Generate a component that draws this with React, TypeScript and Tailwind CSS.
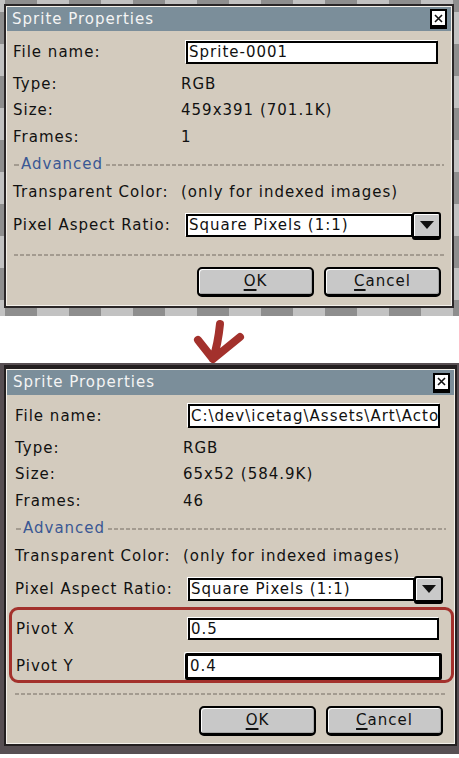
import type { ReactNode } from 'react'

const DASHES = 'h-[2px] bg-[repeating-linear-gradient(90deg,#a39b90_0_4px,transparent_4px_6px)]'

function CloseBox() {
  return (
    <div className="flex h-[20px] w-[17px] items-center justify-center border-2 border-b-[4px] border-black bg-white">
      <svg width="9" height="9" viewBox="0 0 9 9">
        <path d="M1 1L8 8M8 1L1 8" stroke="#111" strokeWidth="1.6" />
      </svg>
    </div>
  )
}

function TitleBar({ className }: { className: string }) {
  return (
    <div className={`flex shrink-0 items-center justify-between bg-[#7b8e9a] pr-[4px] ${className}`}>
      <span className="text-[#f4f4f4]">Sprite Properties</span>
      <CloseBox />
    </div>
  )
}

function InfoRow({ label, value, className }: { label: string; value: string; className: string }) {
  return (
    <div className={`flex items-center ${className}`}>
      <span className="w-[168px] shrink-0">{label}</span>
      <span className="whitespace-nowrap">{value}</span>
    </div>
  )
}

function TextField({ text, className }: { text: string; className: string }) {
  return (
    <div
      className={`flex shrink-0 items-center overflow-hidden whitespace-nowrap bg-white pl-[1px] shadow-[-1px_-1px_0_#fff] ${className}`}
    >
      {text}
    </div>
  )
}

function Dropdown() {
  return (
    <div className="ml-[5px] flex items-center">
      <div className="flex h-[23px] w-[227px] items-center border-2 border-black bg-white pl-[1px] shadow-[-1px_-1px_0_#fff]">
        Square Pixels (1:1)
      </div>
      <div className="-ml-[1px] flex h-[28px] w-[29px] items-center justify-center rounded-[3px] border-2 border-b-[4px] border-black bg-[#c9c9c9] shadow-[inset_1px_1px_0_#fff]">
        <svg width="14" height="8" viewBox="0 0 14 8">
          <path d="M0 0H14L7 8Z" fill="#111" />
        </svg>
      </div>
    </div>
  )
}

function AdvancedRow() {
  return (
    <div className="flex h-[27px] items-center pl-[1px]">
      <span className="h-[2px] w-[5px] bg-[#a39b90]" />
      <span className="ml-[2px] text-[#3a5894]">Advanced</span>
      <span className={`ml-[3px] flex-1 ${DASHES}`} />
    </div>
  )
}

function Btn({ first, rest }: { first: string; rest: string }) {
  return (
    <div className="flex h-[30px] w-[117px] items-center justify-center rounded-[5px] border-2 border-b-[3px] border-black bg-[#c8c8c8] shadow-[inset_1px_1px_0_#fff,inset_-1px_-1px_0_#a8a8a8]">
      <span className="underline decoration-[2px] underline-offset-[3px]">{first}</span>
      <span>{rest}</span>
    </div>
  )
}

function Buttons() {
  return (
    <div className="mt-[11px] flex h-[30px] justify-end gap-[10px] pr-[3px]">
      <Btn first="O" rest="K" />
      <Btn first="C" rest="ancel" />
    </div>
  )
}

function CommonRows({ size, frames, children }: { size: string; frames: string; children?: ReactNode }) {
  return (
    <>
      <InfoRow label="Type:" value="RGB" className="mt-[7px] h-[26px]" />
      <InfoRow label="Size:" value={size} className="h-[27px]" />
      <InfoRow label="Frames:" value={frames} className="h-[27px]" />
      <AdvancedRow />
      <InfoRow label="Transparent Color:" value="(only for indexed images)" className="h-[28px]" />
      <div className="mt-[5px] flex h-[29px] items-center">
        <span className="w-[168px] shrink-0">Pixel Aspect Ratio:</span>
        <Dropdown />
      </div>
      {children}
    </>
  )
}

export default function App() {
  return (
    <div className="flex h-[758px] w-[459px] flex-col overflow-hidden bg-white font-['DejaVu_Sans',sans-serif] text-[15px] tracking-[1px] text-[#111]">
      {/* before */}
      <div className="h-[316px] shrink-0 bg-[conic-gradient(#c2c2c2_25%,#8e8e8e_0_50%,#c2c2c2_0_75%,#8e8e8e_0)] bg-[length:64px_64px] bg-[position:5px_44px] pl-[4px] pt-[4px]">
        <div className="flex h-[304px] w-[450px] flex-col border-2 border-[#2a2627]">
          <div className="flex flex-1 flex-col border border-[#f3f0ea] bg-[#d3cbbe]">
            <TitleBar className="h-[24px] pl-[5px]" />
            <div className="flex flex-col pl-[6px] pr-[7px] pt-[10px]">
              <div className="flex h-[23px] items-center">
                <span className="w-[168px] shrink-0">File name:</span>
                <TextField text="Sprite-0001" className="ml-[5px] h-[23px] w-[252px] border-2 border-black" />
              </div>
              <CommonRows size="459x391 (701.1K)" frames="1" />
              <div className={`mt-[14px] ml-[1px] ${DASHES}`} />
              <Buttons />
            </div>
          </div>
        </div>
      </div>

      {/* arrow */}
      <div className="h-[47px] shrink-0">
        <svg width="459" height="47" viewBox="0 0 459 47" className="overflow-visible">
          <path
            d="M220 8Q218 28 213 43M198 24L213 43L240 21"
            fill="none"
            stroke="#a3312c"
            strokeWidth="8"
            strokeLinecap="round"
            strokeLinejoin="round"
          />
        </svg>
      </div>

      {/* after */}
      <div className="h-[391px] shrink-0 bg-[#574f53] pl-[4px] pt-[2px]">
        <div className="flex h-[381px] w-[453px] flex-col border-2 border-t-4 border-[#231f20]">
          <div className="flex flex-1 flex-col border border-[#f3f0ea] bg-[#d3cbbe]">
            <TitleBar className="h-[25px] pl-[6px]" />
            <div className="flex flex-col pl-[8px] pr-[8px] pt-[9px]">
              <div className="flex h-[24px] items-center">
                <span className="w-[168px] shrink-0">File name:</span>
                <TextField
                  text={'C:\\dev\\icetag\\Assets\\Art\\Acto'}
                  className="ml-[5px] h-[24px] w-[252px] border-2 border-black"
                />
              </div>
              <CommonRows size="65x52 (584.9K)" frames="46">
                <div className="-mr-[8px] -ml-[6px] mt-[3px] flex flex-col rounded-[9px] border-[3px] border-[#a3312c] pt-[8px] pl-[4px] pr-[6px]">
                  <div className="flex h-[22px] items-center">
                    <span className="w-[172px] shrink-0">Pivot X</span>
                    <TextField text="0.5" className="h-[22px] w-[251px] border-2 border-black" />
                  </div>
                  <div className="mt-[13px] flex h-[27px] items-center">
                    <span className="w-[172px] shrink-0">Pivot Y</span>
                    <TextField text="0.4" className="-ml-[3px] h-[27px] w-[257px] rounded-[2px] border-[3px] border-black pl-[2px]" />
                  </div>
                </div>
              </CommonRows>
              <div className={`mt-[10px] ${DASHES}`} />
              <Buttons />
            </div>
          </div>
        </div>
      </div>
    </div>
  )
}
